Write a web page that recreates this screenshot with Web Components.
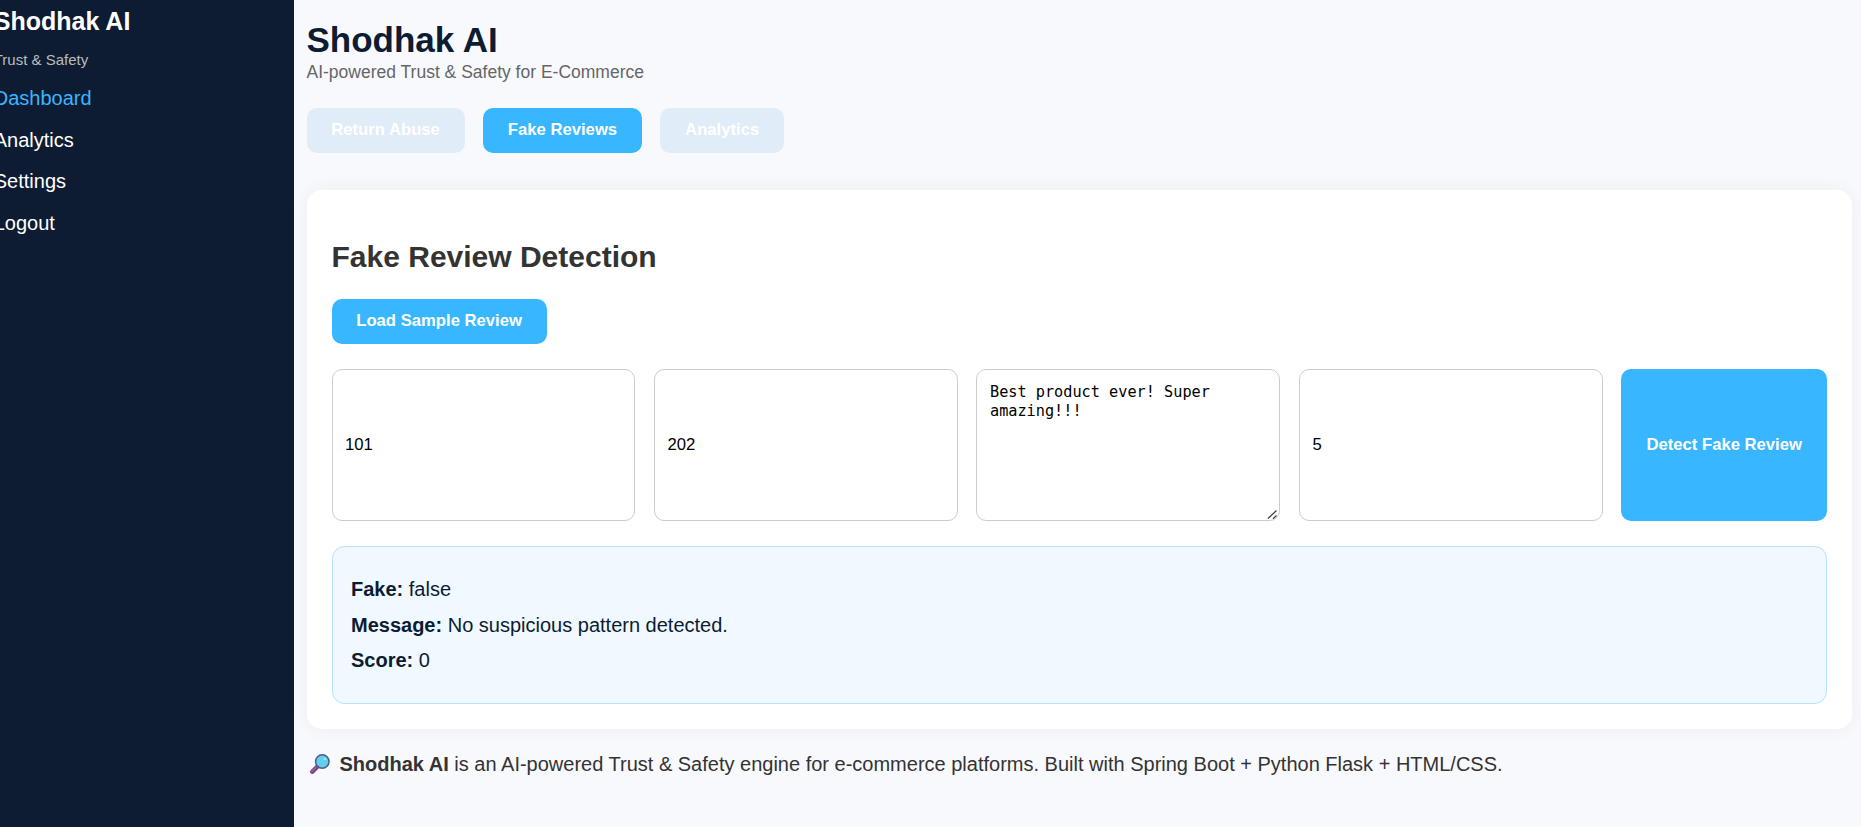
<!DOCTYPE html>
<html lang="en">
<head>
<meta charset="utf-8">
<title>Shodhak AI</title>
<style>
html, body { margin: 0; height: 100%; }
body { font: 20px/23px "Liberation Sans", Arial, sans-serif; color: #333; background: #f8f9fd; overflow: hidden; }
</style>
</head>
<body>
<shodhak-app></shodhak-app>
<script>
function define(name, html, setup) {
  const tpl = document.createElement('template');
  tpl.innerHTML = html;
  customElements.define(name, class extends HTMLElement {
    constructor() {
      super();
      this.attachShadow({ mode: 'open' }).append(tpl.content.cloneNode(true));
    }
    connectedCallback() { if (setup) setup(this, this.shadowRoot); }
  });
}

define('nav-item', `
<style>
:host { display: block; line-height: 23px; margin-bottom: 18.67px; color: #fff; }
:host([active]) { color: #38b6ff; }
</style><slot></slot>`);

define('side-bar', `
<style>
:host { display: block; box-sizing: border-box; width: 294px; height: 100%; background: #0d1c32; color: #fff; overflow: hidden; }
.inner { margin-left: -6.25px; padding-top: 7px; }
.brand { font-size: 25px; font-weight: bold; line-height: 29px; }
.tag { font-size: 15px; line-height: 17px; color: #bbb; margin: 15.3px 0 18.7px; }
</style>
<div class="inner">
  <div class="brand">Shodhak AI</div>
  <div class="tag">Trust &amp; Safety</div>
  <slot></slot>
</div>`);

define('page-header', `
<style>
:host { display: block; }
h1 { margin: 0; font-size: 35px; line-height: 40px; color: #0d1c32; }
p { margin: 2px 0 0; font-size: 17.5px; line-height: 20px; color: #666; }
</style>
<h1><slot name="title"></slot></h1>
<p><slot></slot></p>`);

define('app-button', `
<style>
:host { display: inline-flex; }
button { flex: 1; box-sizing: border-box; min-height: 45px; margin: 0; border: 0; border-radius: 10px; padding: 12px 24.75px 14px;
  background: #38b6ff; color: #fff; font: bold 16.6667px/19px "Liberation Sans", Arial, sans-serif; white-space: nowrap; }
:host([muted]) button { background: #e0ecf8; }
:host([tall]) button { padding: 12px 25px 14px; }
</style>
<button type="button"><slot></slot></button>`);

define('tab-row', `
<style>:host { display: flex; gap: 18.5px; }</style><slot></slot>`);

define('panel-card', `
<style>
:host { display: block; background: #fff; border-radius: 15px; padding: 25px; box-shadow: 0 0 19px rgba(0,0,0,.05); }
h2 { margin: 25px 0; font-size: 30px; line-height: 34px; }
</style>
<h2><slot name="title"></slot></h2>
<slot></slot>`);

define('field-row', `
<style>:host { display: flex; gap: 18.75px; height: 152px; margin: 25px 0; }</style><slot></slot>`);

define('text-field', `
<style>
:host { display: flex; flex: 1 1 0; min-width: 0; }
input { flex: 1; min-width: 0; box-sizing: border-box; margin: 0; border: 1px solid #ccc; border-radius: 10px; padding: 12.5px;
  background: #fff; color: #000; outline: 0; font: 16.6667px "Liberation Sans", Arial, sans-serif; }
</style><input type="text">`,
(el, root) => { root.querySelector('input').value = el.getAttribute('value'); });

define('review-field', `
<style>
:host { display: flex; flex: 1 1 0; min-width: 0; position: relative; }
textarea { flex: 1; min-width: 0; box-sizing: border-box; margin: 0; border: 1px solid #ccc; border-radius: 10px; padding: 12.5px;
  background: #fff; color: #000; outline: 0; resize: none; overflow: hidden; font: 15.22px/19px "DejaVu Sans Mono", monospace; }
svg { position: absolute; right: 2px; bottom: 1px; }
</style><textarea></textarea>
<svg width="11" height="11" viewBox="0 0 11 11" fill="none" stroke="#444" stroke-width="1.3"><path d="M1 9.5 9.5 1.5M6 9.8 9.5 6.5"/></svg>`,
(el, root) => { root.querySelector('textarea').value = el.getAttribute('value'); });

define('result-line', `
<style>:host { display: block; line-height: 35.5px; } b { font-weight: bold; }</style>
<b><slot name="label"></slot></b> <slot></slot>`);

define('result-box', `
<style>
:host { display: block; box-sizing: border-box; height: 158px; padding: 25.3px 18.5px; border: 1px solid #b8e0ff; border-radius: 12.5px;
  background: #f0f9ff; color: #0d1c32; }
</style><slot></slot>`);

define('magnifier-icon', `
<style>:host { display: block; width: 20px; height: 20px; } svg { display: block; }</style>
<svg width="20" height="20" viewBox="0 0 20 20">
  <path d="M2.3 17.7 7.6 12.4" stroke="#7c4585" stroke-width="4.4" stroke-linecap="round"/>
  <path d="M2 17.2 6 13.3" stroke="#9a62a0" stroke-width="1.4" stroke-linecap="round"/>
  <circle cx="12.3" cy="7.5" r="6.7" fill="#63cdea" stroke="#4d5a91" stroke-width="1.5"/>
  <circle cx="14.8" cy="4.9" r="1.1" fill="#b4e9f6"/>
</svg>`);

define('page-footer', `
<style>:host { display: flex; padding-left: 3.5px; margin-top: 24px; } magnifier-icon { margin: 1px 9.5px 0 0; }</style>
<magnifier-icon></magnifier-icon><div><slot></slot></div>`);

define('shodhak-app', `
<style>
:host { display: flex; height: 100vh; }
main { flex: 1; min-width: 0; padding: 20px 9px 0 12.5px; }
tab-row { margin: 26px 0 37px; }
</style>
<side-bar>
  <nav-item active>Dashboard</nav-item>
  <nav-item>Analytics</nav-item>
  <nav-item>Settings</nav-item>
  <nav-item>Logout</nav-item>
</side-bar>
<main>
  <page-header><span slot="title">Shodhak AI</span>AI-powered Trust &amp; Safety for E-Commerce</page-header>
  <tab-row>
    <app-button muted>Return Abuse</app-button>
    <app-button>Fake Reviews</app-button>
    <app-button muted>Analytics</app-button>
  </tab-row>
  <panel-card>
    <span slot="title">Fake Review Detection</span>
    <app-button>Load Sample Review</app-button>
    <field-row>
      <text-field value="101"></text-field>
      <text-field value="202"></text-field>
      <review-field value="Best product ever! Super amazing!!!"></review-field>
      <text-field value="5"></text-field>
      <app-button tall>Detect Fake Review</app-button>
    </field-row>
    <result-box>
      <result-line><span slot="label">Fake:</span>false</result-line>
      <result-line><span slot="label">Message:</span>No suspicious pattern detected.</result-line>
      <result-line><span slot="label">Score:</span>0</result-line>
    </result-box>
  </panel-card>
  <page-footer><b>Shodhak AI</b> is an AI-powered Trust &amp; Safety engine for e-commerce platforms. Built with Spring Boot + Python Flask + HTML/CSS.</page-footer>
</main>`);
</script>
</body>
</html>
